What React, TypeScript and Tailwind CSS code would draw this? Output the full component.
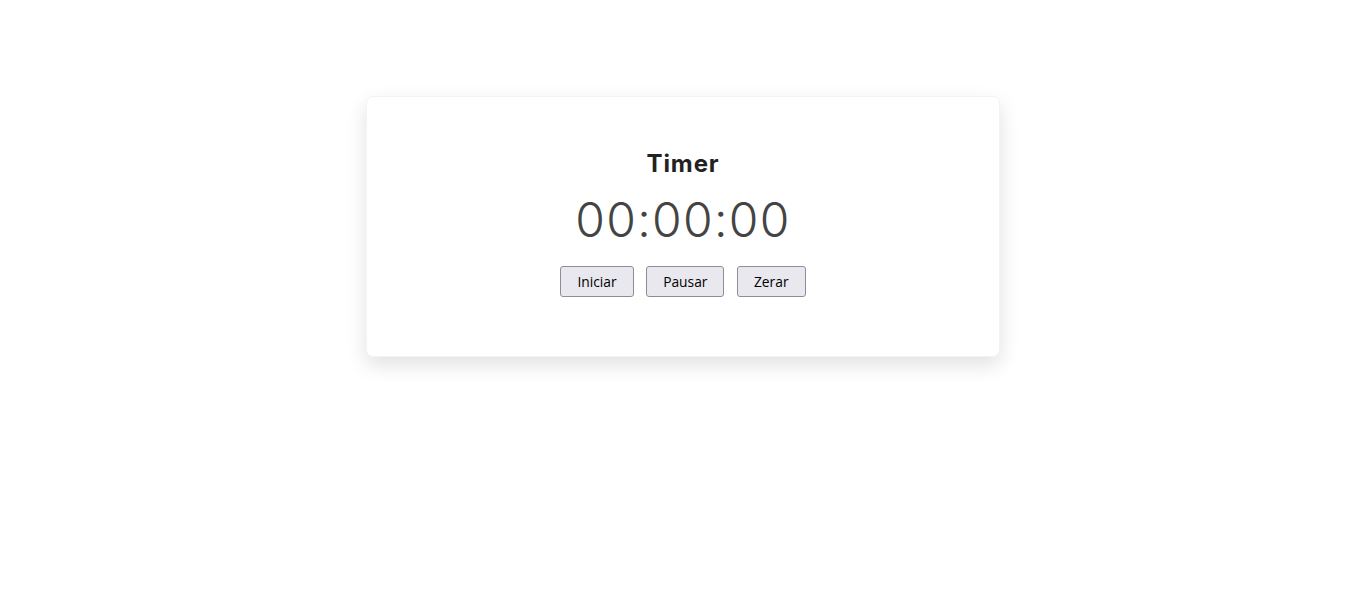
import React from "react";

export default function App() {
  return (
    <div className="min-h-[601px] w-full bg-white flex justify-center pt-[96px]">
      <div className="w-[634px] h-[261px] bg-white rounded-[7px] shadow-[0_8px_20px_rgba(0,0,0,0.12)] border border-[#f3f3f3] flex flex-col items-center pt-[52px]">
        <h1 className="text-[24px] leading-[29px] font-bold text-[#222] tracking-[0.9px]" style={{ fontFamily: '"Inter", "Noto Sans", sans-serif' }}>
          Timer
        </h1>
        <div className="mt-[14px] text-[48px] leading-[56px] font-light text-[#444] tracking-[1.3px]" style={{ fontFamily: '"Inter", "Noto Sans", sans-serif' }}>
          00:00:00
        </div>
        <div className="mt-[18px] flex gap-[12.5px]" style={{ fontFamily: '"Open Sans", "Noto Sans", sans-serif' }}>
          {["Iniciar", "Pausar", "Zerar"].map((t) => (
            <button
              key={t}
              className="px-4 py-[5px] text-[13.8px] leading-[19px] text-black bg-[#e9e8ee] border border-[#8f8c9a] rounded-[3px]"
            >
              {t}
            </button>
          ))}
        </div>
      </div>
    </div>
  );
}
